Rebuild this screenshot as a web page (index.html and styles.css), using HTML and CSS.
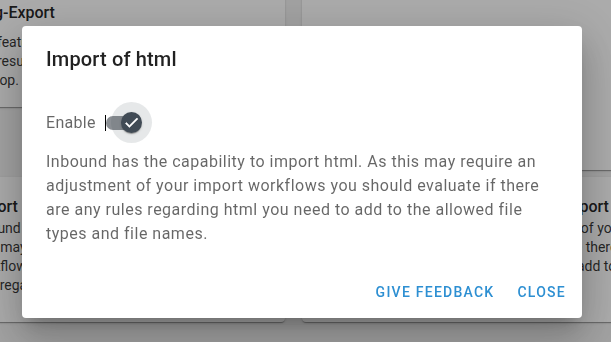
FILE: index.html
```html
<!DOCTYPE html>
<html lang="en">
<head>
<meta charset="utf-8">
<title>Import of html</title>
<link rel="stylesheet" href="styles.css">
</head>
<body>
<main class="page">
  <section class="card card-top-left">
    <h3 class="card-title">Debug-Export</h3>
    <p class="card-text"><span>The features exports all of your</span><span>The results of the selected messages</span><span class="shift">Desktop.</span></p>
  </section>
  <section class="card card-top-right"></section>
  <section class="card card-bottom">
    <h3 class="card-title">Import of eml</h3>
    <p class="card-text"><span>Inbound has the capability to import</span><span>This may require an adjustment</span><span>workflows you should evaluate</span><span>with regard to eml you need</span></p>
  </section>
  <section class="card card-bottom card-offset">
    <h3 class="card-title">Import of msg</h3>
    <p class="card-text"><span>As of your import</span><span>Are there any rules</span><span>to add to the allowed</span></p>
  </section>
</main>

<div class="backdrop">
  <div class="dialog" role="dialog" aria-labelledby="dlg-title">
    <h2 class="dialog-title" id="dlg-title">Import of html</h2>
    <div class="dialog-content">
      <div class="enable-row">
        <span class="enable-label">Enable</span>
        <span class="caret"></span>
        <span class="switch">
          <span class="track"></span>
          <span class="halo"></span>
          <span class="thumb">
            <svg viewBox="0 0 24 24" width="17" height="17" aria-hidden="true"><path d="M9 16.17L4.83 12l-1.42 1.41L9 19 21 7l-1.41-1.41z" fill="#ffffff" stroke="#ffffff" stroke-width="0.8" stroke-linejoin="round"/></svg>
          </span>
        </span>
      </div>
      <p class="dialog-text">Inbound has the capability to import html. As this may require an adjustment of your import workflows you should evaluate if there are any rules regarding html you need to add to the allowed file types and file names.</p>
    </div>
    <div class="dialog-actions">
      <button class="text-button" type="button">Give feedback</button>
      <button class="text-button" type="button">Close</button>
    </div>
  </div>
</div>
</body>
</html>
```

FILE: styles.css
```css
html, body {
  margin: 0;
  padding: 0;
}

body {
  width: 611px;
  height: 342px;
  overflow: hidden;
  background: #f2f2f2;
  font-family: Roboto, "Liberation Sans", sans-serif;
  position: relative;
}

.page {
  display: grid;
  grid-template-columns: 331px 331px;
  column-gap: 17px;
  row-gap: 7px;
  align-items: start;
  margin: -15px 0 0 -46px;
}

.card {
  background: #ffffff;
  border-radius: 4px;
  box-shadow: 0 2px 1px -1px rgba(0,0,0,.2), 0 1px 1px 0 rgba(0,0,0,.14), 0 1px 3px 0 rgba(0,0,0,.12);
  padding: 16px;
  box-sizing: border-box;
  color: rgba(0,0,0,.87);
  overflow: hidden;
}

.card-top-left {
  height: 122px;
}

.card-top-right {
  height: 185px;
}

.card-bottom {
  height: 145px;
  padding-top: 18px;
}

.card-offset {
  padding-left: 259px;
}

.card-title {
  margin: 0;
  font-size: 16px;
  font-weight: 500;
  line-height: 24px;
  white-space: nowrap;
}

.card-top-left .card-title {
  margin-left: -13px;
}

.card-text {
  margin: 8px 0 0;
  font-size: 14px;
  line-height: 19px;
  color: rgba(0,0,0,.8);
}

.card-bottom .card-text {
  margin-top: 0;
}

.card-text span {
  display: block;
  white-space: nowrap;
}

.card-text .shift {
  margin-left: -6px;
}

.backdrop {
  position: fixed;
  inset: 0;
  background: rgba(0,0,0,.33);
  display: flex;
  align-items: flex-start;
  padding: 26px 0 0 22px;
}

.dialog {
  width: 560px;
  background: #ffffff;
  border-radius: 4px;
  box-shadow: 0 11px 15px -7px rgba(0,0,0,.2), 0 24px 38px 3px rgba(0,0,0,.14), 0 9px 46px 8px rgba(0,0,0,.12);
  display: flex;
  flex-direction: column;
}

.dialog-title {
  margin: 0;
  padding: 17px 24px 0;
  font-size: 20px;
  font-weight: 500;
  line-height: 32px;
  letter-spacing: 0.15px;
  color: rgba(0,0,0,.87);
}

.dialog-content {
  padding: 0 24px;
}

.enable-row {
  margin-top: 27px;
  height: 41px;
  display: flex;
  align-items: center;
}

.enable-label {
  font-size: 16px;
  color: rgba(0,0,0,.6);
  letter-spacing: 0.3px;
}

.caret {
  width: 1px;
  height: 16px;
  background: #000000;
  margin-left: 9px;
}

.switch {
  position: relative;
  width: 34px;
  height: 41px;
  display: flex;
  align-items: center;
}

.track {
  width: 34px;
  height: 14px;
  border-radius: 7px;
  background: #8b8f94;
}

.halo {
  position: absolute;
  left: 5px;
  top: 0;
  width: 41px;
  height: 41px;
  border-radius: 50%;
  background: rgba(65,75,85,.13);
}

.thumb {
  position: absolute;
  left: 15px;
  top: 10px;
  width: 21px;
  height: 21px;
  border-radius: 50%;
  background: #414b55;
  box-shadow: 0 2px 1px -1px rgba(0,0,0,.2), 0 1px 1px 0 rgba(0,0,0,.14), 0 1px 3px 0 rgba(0,0,0,.12);
  display: flex;
  align-items: center;
  justify-content: center;
}

.dialog-text {
  margin: 7px 0 0;
  font-size: 16px;
  line-height: 24px;
  letter-spacing: 0.5px;
  color: rgba(0,0,0,.6);
}

.dialog-actions {
  margin-top: 28px;
  padding: 0 8px 8px 8px;
  display: flex;
  justify-content: flex-end;
  gap: 7px;
}

.text-button {
  font-family: Roboto, "Liberation Sans", sans-serif;
  font-size: 14px;
  font-weight: 500;
  letter-spacing: 1.25px;
  text-transform: uppercase;
  color: #2d8fd2;
  background: transparent;
  border: 0;
  height: 36px;
  padding: 0 8px;
  border-radius: 4px;
  cursor: pointer;
}
```
